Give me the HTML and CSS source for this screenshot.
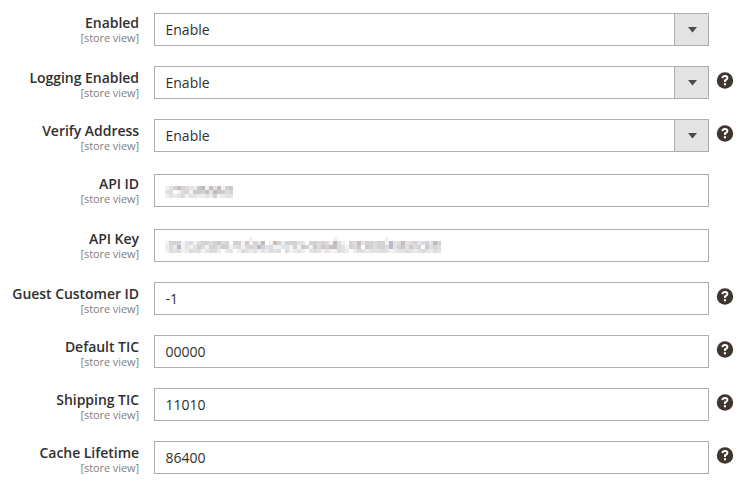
FILE: index.html
```html
<!DOCTYPE html>
<html lang="en">
<head>
<meta charset="utf-8">
<title>Configuration</title>
<link rel="stylesheet" href="styles.css">
</head>
<body>
<form class="fields" id="fields"></form>
<script src="fields.js"></script>
</body>
</html>
```
FILE: styles.css
```css
* { box-sizing: border-box; }
body { margin: 0; background: #fff; color: #303030; font-family: "Open Sans", sans-serif; font-size: 14px; }
.fields { padding-top: 13px; }
.row { display: grid; grid-template-columns: 139px 555px 17px; column-gap: 15px; height: 33px; margin-bottom: 20px; }
.row-wide { margin-bottom: 22px; }
.label { text-align: right; white-space: nowrap; }
.label-drop { padding-top: 2px; }
.name { display: block; font-weight: 600; line-height: 19px; letter-spacing: -.04px; }
.scope { display: block; font-size: 11px; line-height: 11px; letter-spacing: -.08px; color: #808080; }
.control { display: flex; align-items: center; height: 33px; border: 1px solid #adadad; padding-left: 10px; }
.value { flex: 1; padding-left: .5px; line-height: 19px; }
.arrow { display: flex; align-items: center; justify-content: center; width: 34px; height: 31px; background: #e3e3e3; border-left: 1px solid #adadad; }
.arrow svg { display: block; margin-left: 1px; }
.help { display: block; margin: 5px 0 0 -8px; }
.mosaic { display: block; margin: 0 0 2px -.5px; }
```
FILE: fields.js
```js
const rows = [
  { name: "Enabled", value: "Enable", select: true },
  { name: "Logging Enabled", value: "Enable", select: true, help: true, drop: true },
  { name: "Verify Address", value: "Enable", select: true, help: true, drop: true, wide: true },
  { name: "API ID", cells: [
    ".................",
    "17595432681939156",
    "34014516659786645",
    "13234133223251233"], wide: true },
  { name: "API Key", cells: [
    ".....................1....................1............1.............",
    "155517414554564505516153801952555370554541841054935545518349345745385",
    "242813135415536513414548574117715165164659947154606545548756364506454",
    "143412434134420230143231324340412320343131143202432333431233432343243"] },
  { name: "Guest Customer ID", value: "-1", help: true, drop: true },
  { name: "Default TIC", value: "00000", help: true, drop: true },
  { name: "Shipping TIC", value: "11010", help: true, drop: true },
  { name: "Cache Lifetime", value: "86400", help: true, drop: true }
];
const shades = ["#fff", "#f5f1ef", "#ebebec", "#e4e3e4", "#dcdcde", "#d4d2d2", "#cbc9ca", "#dbe5ef", "#b9bcc6", "#c8bdb8"];
const arrow = '<span class="arrow"><svg width="9" height="7"><path d="M0 1h9L4.5 6.5z" fill="#514943"/></svg></span>';
const help = '<svg class="help" width="18" height="18" viewBox="0 0 18 18"><circle cx="9" cy="9.5" r="8.2" fill="#41362f"/><path d="M6.4 7.1Q6.6 5 9 5t2.4 2.1Q11.4 8.5 9 9.5V11" fill="none" stroke="#fff" stroke-width="2"/><path d="M7.9 12.2H10v2.1H7.9z" fill="#fff"/></svg>';
const mosaic = (cells) => `<svg class="mosaic" width="276" height="16" shape-rendering="crispEdges">${cells.map((line, y) =>
  [...line].map((c, x) => c === "." ? "" : `<rect x="${x * 4}" y="${y * 4}" width="4" height="4" fill="${shades[c]}"/>`).join("")).join("")}</svg>`;
document.getElementById("fields").innerHTML = rows.map((r) => `
  <div class="row${r.wide ? " row-wide" : ""}">
    <div class="label${r.drop ? " label-drop" : ""}"><span class="name">${r.name}</span><span class="scope">[store view]</span></div>
    <div class="control"><span class="value">${r.cells ? mosaic(r.cells) : r.value}</span>${r.select ? arrow : ""}</div>
    ${r.help ? help : ""}
  </div>`).join("");
```
